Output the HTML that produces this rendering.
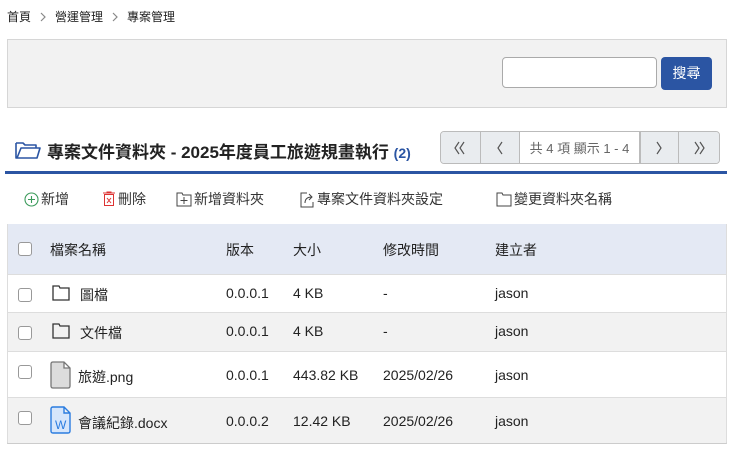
<!DOCTYPE html>
<html><head><meta charset="utf-8"><style>
*{box-sizing:border-box;margin:0;padding:0}
body{width:735px;height:451px;background:#fff;font-family:"Liberation Sans","Noto Sans CJK TC",sans-serif;color:#222;position:relative;overflow:hidden}
.a{position:absolute}
.bc{left:7px;top:8px;font-size:12px;color:#222;display:flex;align-items:center}
.bc svg{margin:0 9px}
.search{left:7px;top:39px;width:720px;height:69px;background:#f2f2f2;border:1px solid #d6d6d6}
.inp{left:502px;top:57px;width:155px;height:31px;background:#fff;border:1px solid #aaa;border-radius:4px}
.btn{left:661px;top:57px;width:51px;height:33px;background:#2b55a3;border-radius:4px;color:#fff;font-size:14px;text-align:center;line-height:33px}
.title{left:47px;top:138px;font-size:17px;font-weight:bold;color:#222}
.title small{font-size:14px;color:#2b55a3}
.pg{left:440px;top:131px;width:280px;height:33px;border:1px solid #bbb;border-radius:4px;background:#fff;display:flex;font-size:13px;color:#666;overflow:hidden}
.pg div{background:#e9ecef;width:40px;border-right:1px solid #bbb;display:flex;align-items:center;justify-content:center}
.pg .t{background:#fff;width:120px;font-size:13px;color:#666}
.pg .l{border-left:1px solid #bbb}
.line{left:5px;top:171px;width:722px;height:3px;background:#2b55a3}
.tb{top:189px;height:20px;font-size:14px;color:#333;display:flex;align-items:center;gap:2px}
.tbl{left:7px;top:224px;width:720px;height:220px;border-left:1px solid #ddd;border-right:1px solid #ddd;border-bottom:2px solid #ccc}
.row{position:absolute;left:0;width:718px;border-top:1px solid #ddd;font-size:14px}
.row span{position:absolute}
.cb{position:absolute;left:10px;width:14px;height:14px;border:1px solid #999;border-radius:3px;background:#fff}
</style></head><body>
<div class="a bc">首頁<svg width="6" height="10"><path d="M1 1L5 5L1 9" fill="none" stroke="#888" stroke-width="1.2"/></svg>營運管理<svg width="6" height="10"><path d="M1 1L5 5L1 9" fill="none" stroke="#888" stroke-width="1.2"/></svg>專案管理</div>
<div class="a search"></div>
<div class="a inp"></div>
<div class="a btn">搜尋</div>
<svg class="a" style="left:14px;top:139px" width="28" height="22" viewBox="0 0 28 22"><path d="M2 4 V19 H23 L26 9 H7 L3 19 M2 4 H9 L11 6 H22 V9" fill="none" stroke="#2b55a3" stroke-width="1.6" stroke-linejoin="round"/></svg>
<div class="a title">專案文件資料夾 - 2025年度員工旅遊規畫執行 <small>(2)</small></div>
<div class="a pg">
<div><svg width="14" height="14"><path d="M6 1L2 7L6 13M11 1L7 7L11 13" fill="none" stroke="#555" stroke-width="1.2"/></svg></div>
<div><svg width="10" height="14"><path d="M7 1L3 7L7 13" fill="none" stroke="#555" stroke-width="1.2"/></svg></div>
<div class="t">共 4 項 顯示 1 - 4</div>
<div class="l"><svg width="10" height="14"><path d="M3 1L7 7L3 13" fill="none" stroke="#555" stroke-width="1.2"/></svg></div>
<div style="border-right:none"><svg width="14" height="14"><path d="M3 1L7 7L3 13M8 1L12 7L8 13" fill="none" stroke="#555" stroke-width="1.2"/></svg></div></div>
<div class="a line"></div>
<div class="a tb" style="left:24px"><svg width="15" height="15"><circle cx="7.5" cy="7.5" r="6.5" fill="none" stroke="#3a9a5a" stroke-width="1.1"/><path d="M7.5 4V11M4 7.5H11" stroke="#3a9a5a" stroke-width="1.1"/></svg>新增</div>
<div class="a tb" style="left:102px"><svg width="14" height="16"><path d="M1 2H13M5 2V1H9V2" fill="none" stroke="#d33"/><rect x="2.5" y="3.5" width="9" height="11" fill="none" stroke="#d33"/><path d="M5 7L9 12M9 7L5 12" stroke="#d33"/></svg>刪除</div>
<div class="a tb" style="left:176px"><svg width="16" height="15"><path d="M1 1H6L7 3H15V14H1Z" fill="none" stroke="#444"/><path d="M8 5V12M4.5 8.5H11.5" stroke="#444"/></svg>新增資料夾</div>
<div class="a tb" style="left:299px"><svg width="16" height="17"><path d="M8 2H2V16H14V11" fill="none" stroke="#444"/><path d="M6 12Q6 6 13 6M10 3L13 6L10 9" fill="none" stroke="#444"/></svg>專案文件資料夾設定</div>
<div class="a tb" style="left:496px"><svg width="16" height="15"><path d="M1 1H6L7 3H15V14H1Z" fill="none" stroke="#444"/></svg>變更資料夾名稱</div>
<div class="a tbl">
<div class="row" style="top:0;height:50px;background:#e4e9f4;border-top:none"><div class="cb" style="top:18px"></div><span style="left:42px;top:16px">檔案名稱</span><span style="left:218px;top:16px">版本</span><span style="left:285px;top:16px">大小</span><span style="left:375px;top:16px">修改時間</span><span style="left:487px;top:16px">建立者</span></div>
<div class="row" style="top:50px;height:38px;background:#fff"><div class="cb" style="top:13px"></div><svg style="position:absolute;left:44px;top:10px" width="18" height="16"><path d="M1 1H7L8 3H17V15H1Z" fill="none" stroke="#333" stroke-width="1.3"/></svg><span style="left:72px;top:10px">圖檔</span><span style="left:218px;top:10px">0.0.0.1</span><span style="left:285px;top:10px">4 KB</span><span style="left:375px;top:10px">-</span><span style="left:487px;top:10px">jason</span></div>
<div class="row" style="top:88px;height:39px;background:#f2f2f2"><div class="cb" style="top:13px"></div><svg style="position:absolute;left:44px;top:10px" width="18" height="16"><path d="M1 1H7L8 3H17V15H1Z" fill="none" stroke="#333" stroke-width="1.3"/></svg><span style="left:72px;top:10px">文件檔</span><span style="left:218px;top:10px">0.0.0.1</span><span style="left:285px;top:10px">4 KB</span><span style="left:375px;top:10px">-</span><span style="left:487px;top:10px">jason</span></div>
<div class="row" style="top:127px;height:46px;background:#fff"><div class="cb" style="top:13px"></div><svg style="position:absolute;left:42px;top:9px" width="22" height="28"><path d="M3 1H14L20 7V25Q20 27 18 27H3Q1 27 1 25V3Q1 1 3 1ZM14 1V7H20" fill="#dcdcdc" stroke="#777" stroke-width="1.3"/></svg><span style="left:70px;top:15px">旅遊.png</span><span style="left:218px;top:15px">0.0.0.1</span><span style="left:285px;top:15px">443.82 KB</span><span style="left:375px;top:15px">2025/02/26</span><span style="left:487px;top:15px">jason</span></div>
<div class="row" style="top:173px;height:46px;background:#f2f2f2"><div class="cb" style="top:13px"></div><svg style="position:absolute;left:42px;top:8px" width="22" height="28"><path d="M3 1H14L20 7V25Q20 27 18 27H3Q1 27 1 25V3Q1 1 3 1ZM14 1V7H20" fill="#d6e6fb" stroke="#2a7ce0" stroke-width="1.4"/><text x="5" y="23" font-size="12" fill="#2a7ce0" font-family="Liberation Sans">W</text></svg><span style="left:70px;top:15px">會議紀錄.docx</span><span style="left:218px;top:15px">0.0.0.2</span><span style="left:285px;top:15px">12.42 KB</span><span style="left:375px;top:15px">2025/02/26</span><span style="left:487px;top:15px">jason</span></div>
</div>
</body></html>
